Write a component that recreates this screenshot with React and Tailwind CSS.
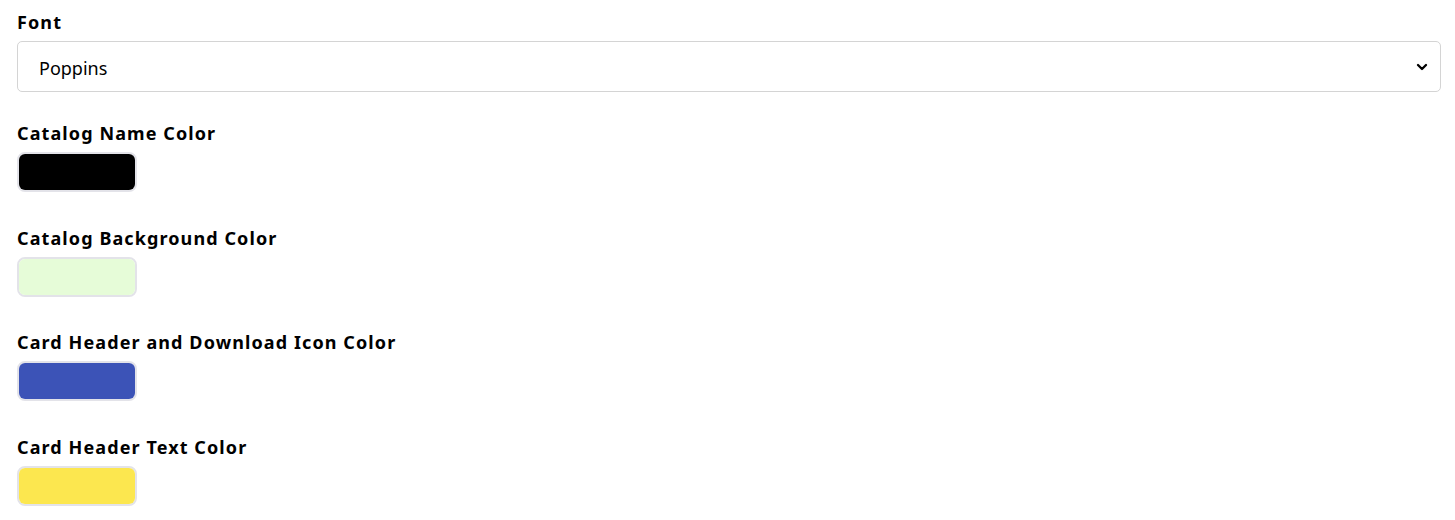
import { ChevronDown } from 'lucide-react';

const swatches = [
  { label: 'Catalog Name Color', color: 'bg-[#000000]' },
  { label: 'Catalog Background Color', color: 'bg-[#e6fcd8]' },
  { label: 'Card Header and Download Icon Color', color: 'bg-[#3c53b7]' },
  { label: 'Card Header Text Color', color: 'bg-[#fce74f]' },
];

export default function App() {
  return (
    <div className="w-[1455px] h-[520px] bg-white px-[17px] pt-[9px] text-black font-['Noto_Sans',sans-serif] overflow-hidden">
      {/* Font select */}
      <div className="flex flex-col">
        <label className="text-[18px] font-bold leading-[27px] tracking-[1.1px]">Font</label>
        <div className="mt-[5px] h-[51px] w-[1424px] border border-[#d4d4d4] rounded-[5px] flex items-center justify-between pl-[21px] pr-[10px]">
          <span className="text-[18px] pt-[3px]">Poppins</span>
          <ChevronDown size={16} strokeWidth={3.5} />
        </div>
      </div>

      {/* Colour pickers */}
      <div className="mt-[28px] flex flex-col gap-[32.5px]">
        {swatches.map((s) => (
          <div key={s.label} className="flex flex-col">
            <label className="text-[18px] font-bold leading-[27px] tracking-[1.1px]">{s.label}</label>
            <div className="mt-[5px] w-[120px] h-[40px] border-2 border-[#e3e3e9] rounded-[8px]">
              <div className={`w-full h-full rounded-[6px] ${s.color}`}></div>
            </div>
          </div>
        ))}
      </div>
    </div>
  );
}
